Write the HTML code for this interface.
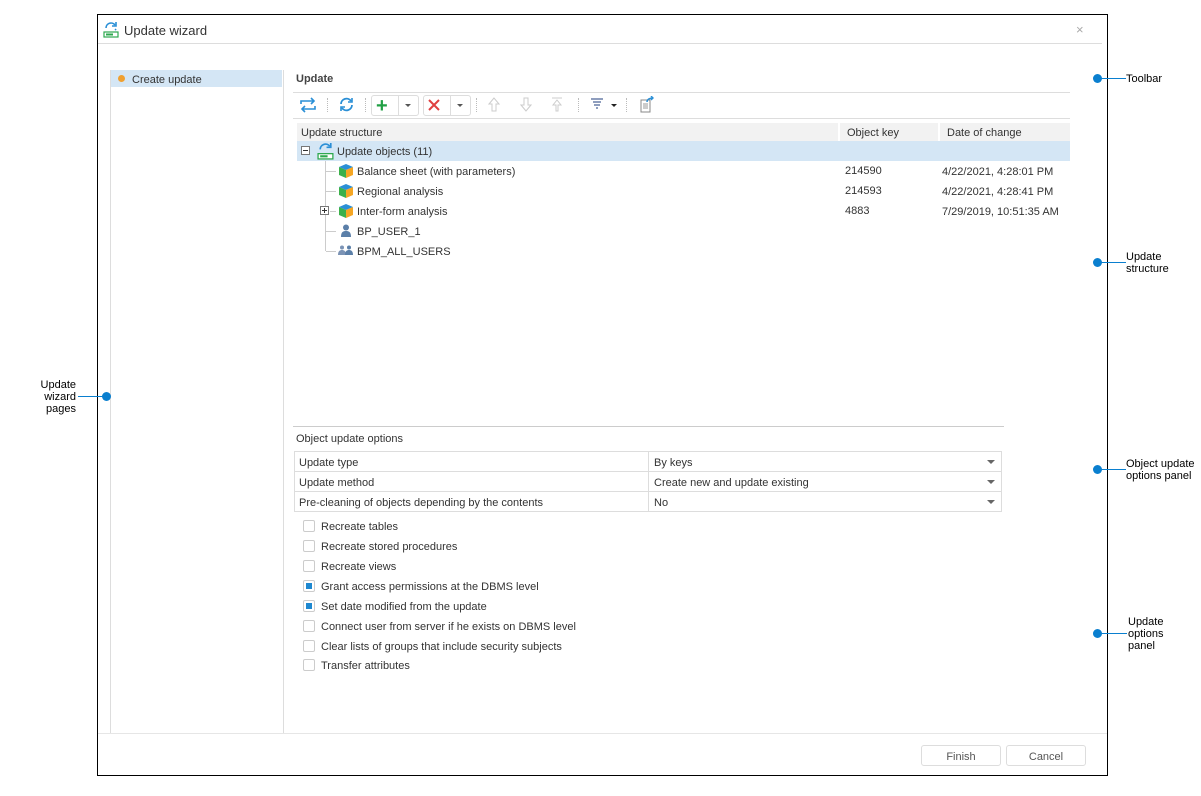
<!DOCTYPE html>
<html><head><meta charset="utf-8"><style>
*{margin:0;padding:0;box-sizing:border-box}
body{width:1201px;height:796px;background:#fff;font-family:"Liberation Sans",Arial,sans-serif;font-size:11px;color:#333;position:relative;overflow:hidden}
.a{position:absolute}
.t{white-space:nowrap;padding-top:1px}
.cb{position:absolute;left:303px;width:12px;height:12px;border:1px solid #ccc;border-radius:2px;background:#fff}
.cb.on::after{content:"";position:absolute;left:2px;top:2px;width:6px;height:6px;background:#1e88d0}
.cl{position:absolute;left:321px}
.dot{position:absolute;width:9px;height:9px;border-radius:50%;background:#0a7fcf}
.ln{position:absolute;height:1px;background:#0a7fcf}
.ann{position:absolute;font-size:11px;color:#000;line-height:12px}
.row{position:absolute;left:294px;width:708px;height:20px;border:1px solid #ddd;border-top:none}
.row span{position:absolute;top:5px}
.arr{position:absolute;right:6px;top:8px;border-left:4px solid transparent;border-right:4px solid transparent;border-top:4px solid #666}
.vsep{position:absolute;top:98px;width:1px;height:14px;border-left:1px dotted #bbb}
.cube{position:absolute;width:14px;height:14px}
</style></head><body>

<div class="a" style="left:97px;top:14px;width:1011px;height:762px;border:1px solid #000"></div>
<svg class="a" style="left:103px;top:21px" width="17" height="17" viewBox="0 0 17 17"><path d="M3 7a5 5 0 0 1 9-3" stroke="#2a8fd6" stroke-width="1.6" fill="none"/><path d="M13 1v4h-4" stroke="#2a8fd6" stroke-width="1.6" fill="none"/><path d="M13 8a5 5 0 0 1-1 1" stroke="#2a8fd6" stroke-width="1.6" fill="none"/><rect x="1" y="11" width="14" height="5" fill="#fff" stroke="#2ea84f" stroke-width="1.2"/><rect x="3" y="12.5" width="7" height="2" fill="#2ea84f"/></svg>
<div class="a t" style="left:124px;top:22px;font-size:13px;color:#333">Update wizard</div>
<div class="a" style="left:1076px;top:22px;font-size:13px;color:#aaa">×</div>
<div class="a" style="left:98px;top:43px;width:1004px;height:1px;background:#ddd"></div>

<div class="a" style="left:110px;top:70px;width:1px;height:663px;background:#ddd"></div>
<div class="a" style="left:283px;top:70px;width:1px;height:663px;background:#ddd"></div>
<div class="a" style="left:111px;top:70px;width:171px;height:17px;background:#d4e6f5"></div>
<div class="a" style="left:118px;top:75px;width:7px;height:7px;border-radius:50%;background:#f0a030"></div>
<div class="a t" style="left:132px;top:73px">Create update</div>
<div class="a" style="left:98px;top:733px;width:1009px;height:1px;background:#e6e6e6"></div>

<div class="a t" style="left:296px;top:72px;font-weight:bold;color:#444">Update</div>
<div class="a" style="left:293px;top:92px;width:777px;height:1px;background:#ddd"></div>
<div class="a" style="left:293px;top:118px;width:777px;height:1px;background:#ddd"></div>
<svg class="a" style="left:299px;top:97px" width="18" height="16" viewBox="0 0 18 16"><path d="M2 7V4h12" stroke="#2a8fd6" stroke-width="1.6" fill="none"/><path d="M12 1l3 3-3 3" stroke="#2a8fd6" stroke-width="1.6" fill="none"/><path d="M16 9v3H4" stroke="#2a8fd6" stroke-width="1.6" fill="none"/><path d="M6 9l-3 3 3 3" stroke="#2a8fd6" stroke-width="1.6" fill="none"/></svg>
<div class="vsep" style="left:327px"></div>
<svg class="a" style="left:338px;top:96px" width="17" height="17" viewBox="0 0 17 17"><path d="M3 8a5.5 5.5 0 0 1 10-3" stroke="#2a8fd6" stroke-width="1.8" fill="none"/><path d="M14 9a5.5 5.5 0 0 1-10 3" stroke="#2a8fd6" stroke-width="1.8" fill="none"/><path d="M14 2v4h-4M3 15v-4h4" stroke="#2a8fd6" stroke-width="1.6" fill="none"/></svg>
<div class="vsep" style="left:365px"></div>
<div class="a" style="left:371px;top:95px;width:48px;height:21px;border:1px solid #ddd;border-radius:3px"></div>
<div class="a" style="left:398px;top:96px;width:1px;height:19px;background:#ddd"></div>
<div class="a" style="left:376px;top:98px;font-size:20px;line-height:16px;color:#22a045;font-weight:bold">+</div>
<div class="a" style="left:405px;top:104px;border-left:3px solid transparent;border-right:3px solid transparent;border-top:3px solid #555"></div>
<div class="a" style="left:423px;top:95px;width:48px;height:21px;border:1px solid #ddd;border-radius:3px"></div>
<div class="a" style="left:450px;top:96px;width:1px;height:19px;background:#ddd"></div>
<svg class="a" style="left:428px;top:99px" width="12" height="12"><path d="M1 1l10 10M11 1L1 11" stroke="#e04040" stroke-width="2"/></svg>
<div class="a" style="left:457px;top:104px;border-left:3px solid transparent;border-right:3px solid transparent;border-top:3px solid #555"></div>
<div class="vsep" style="left:476px"></div>
<svg class="a" style="left:488px;top:97px" width="12" height="15"><path d="M6 1L1 7h3v7h4V7h3z" stroke="#ccc" fill="none"/></svg>
<svg class="a" style="left:520px;top:97px" width="12" height="15"><path d="M6 14L1 8h3V1h4v7h3z" stroke="#ccc" fill="none"/></svg>
<svg class="a" style="left:551px;top:97px" width="12" height="15"><path d="M1 1h10M6 3L2 8h3v6h2V8h3z" stroke="#ccc" fill="none"/></svg>
<div class="vsep" style="left:578px"></div>
<svg class="a" style="left:590px;top:98px" width="14" height="13"><path d="M1 1h12M3 4h8M4 7h6M6 10h2" stroke="#6a7fa8" stroke-width="1.6"/></svg>
<div class="a" style="left:611px;top:104px;border-left:3px solid transparent;border-right:3px solid transparent;border-top:3px solid #222"></div>
<div class="vsep" style="left:626px"></div>
<svg class="a" style="left:639px;top:96px" width="16" height="17"><path d="M2 4h9v12H2z" fill="#fff" stroke="#888"/><path d="M4 8h5M4 10h5M4 12h5" stroke="#999"/><path d="M8 6c0-3 3-4 6-4M12 0l2 2-2 2" stroke="#2a8fd6" stroke-width="1.4" fill="none"/></svg>

<div class="a" style="left:297px;top:123px;width:773px;height:18px;background:#f2f2f2"></div>
<div class="a" style="left:838px;top:123px;width:2px;height:18px;background:#fff"></div>
<div class="a" style="left:938px;top:123px;width:2px;height:18px;background:#fff"></div>
<div class="a t" style="left:301px;top:126px;color:#333">Update structure</div>
<div class="a t" style="left:847px;top:126px">Object key</div>
<div class="a t" style="left:947px;top:126px">Date of change</div>
<div class="a" style="left:297px;top:141px;width:773px;height:20px;background:#d4e6f5"></div>
<div class="a" style="left:301px;top:146px;width:9px;height:9px;border:1px solid #777;background:#fff"></div>
<div class="a" style="left:303px;top:150px;width:5px;height:1px;background:#333"></div>
<svg class="a" style="left:317px;top:142px" width="18" height="18" viewBox="0 0 17 17"><path d="M3 7a5 5 0 0 1 9-3" stroke="#2a8fd6" stroke-width="1.6" fill="none"/><path d="M13 1v4h-4" stroke="#2a8fd6" stroke-width="1.6" fill="none"/><rect x="1" y="11" width="14" height="5" fill="#fff" stroke="#2ea84f" stroke-width="1.2"/><rect x="3" y="12.5" width="7" height="2" fill="#2ea84f"/></svg>
<div class="a t" style="left:337px;top:145px">Update objects (11)</div>
<div class="a" style="left:325px;top:161px;width:1px;height:90px;background:#ccc"></div>
<div class="a" style="left:326px;top:171px;width:10px;height:1px;background:#ccc"></div>
<div class="a" style="left:326px;top:191px;width:10px;height:1px;background:#ccc"></div>
<div class="a" style="left:330px;top:211px;width:6px;height:1px;background:#ccc"></div>
<div class="a" style="left:326px;top:231px;width:10px;height:1px;background:#ccc"></div>
<div class="a" style="left:326px;top:251px;width:10px;height:1px;background:#ccc"></div>
<div class="a" style="left:320px;top:206px;width:9px;height:9px;border:1px solid #777;background:#fff"></div>
<div class="a" style="left:322px;top:210px;width:5px;height:1px;background:#333"></div>
<div class="a" style="left:324px;top:208px;width:1px;height:5px;background:#333"></div>
<svg class="cube" style="left:339px;top:164px" viewBox="0 0 14 14"><path d="M7 0l7 3-7 3-7-3z" fill="#2a8fd6"/><path d="M0 3l7 3v8L0 11z" fill="#3bb04a"/><path d="M14 3L7 6v8l7-3z" fill="#f5a623"/></svg>
<svg class="cube" style="left:339px;top:184px" viewBox="0 0 14 14"><path d="M7 0l7 3-7 3-7-3z" fill="#2a8fd6"/><path d="M0 3l7 3v8L0 11z" fill="#3bb04a"/><path d="M14 3L7 6v8l7-3z" fill="#f5a623"/></svg>
<svg class="cube" style="left:339px;top:204px" viewBox="0 0 14 14"><path d="M7 0l7 3-7 3-7-3z" fill="#2a8fd6"/><path d="M0 3l7 3v8L0 11z" fill="#3bb04a"/><path d="M14 3L7 6v8l7-3z" fill="#f5a623"/></svg>
<svg class="a" style="left:340px;top:224px" width="12" height="13"><circle cx="6" cy="3.5" r="3" fill="#5b7fa8"/><path d="M1 13c0-5 2-6 5-6s5 1 5 6z" fill="#5b7fa8"/></svg>
<svg class="a" style="left:338px;top:245px" width="16" height="10"><circle cx="4" cy="2.5" r="2" fill="#7b93b5"/><circle cx="11" cy="2.5" r="2" fill="#5b7fa8"/><path d="M0 10c0-4 2-5 4-5s4 1 4 5z" fill="#7b93b5"/><path d="M7 10c0-4 2-5 4-5s4 1 4 5z" fill="#5b7fa8"/></svg>
<div class="a t" style="left:357px;top:165px">Balance sheet (with parameters)</div>
<div class="a t" style="left:357px;top:185px">Regional analysis</div>
<div class="a t" style="left:357px;top:205px">Inter-form analysis</div>
<div class="a t" style="left:357px;top:225px">BP_USER_1</div>
<div class="a t" style="left:357px;top:245px">BPM_ALL_USERS</div>
<div class="a t" style="left:845px;top:164px">214590</div>
<div class="a t" style="left:845px;top:184px">214593</div>
<div class="a t" style="left:845px;top:204px">4883</div>
<div class="a t" style="left:942px;top:165px">4/22/2021, 4:28:01 PM</div>
<div class="a t" style="left:942px;top:185px">4/22/2021, 4:28:41 PM</div>
<div class="a t" style="left:942px;top:205px">7/29/2019, 10:51:35 AM</div>

<div class="a" style="left:293px;top:426px;width:711px;height:1px;background:#ccc"></div>
<div class="a t" style="left:296px;top:432px">Object update options</div>
<div class="row" style="top:451px;height:21px;border-top:1px solid #ddd"><span style="left:4px">Update type</span><span style="left:359px">By keys</span><div class="arr"></div></div>
<div class="row" style="top:472px"><span style="left:4px">Update method</span><span style="left:359px">Create new and update existing</span><div class="arr"></div></div>
<div class="row" style="top:492px"><span style="left:4px">Pre-cleaning of objects depending by the contents</span><span style="left:359px">No</span><div class="arr"></div></div>
<div class="a" style="left:648px;top:451px;width:1px;height:60px;background:#ddd"></div>

<div class="cb" style="top:520px"></div><div class="cl t" style="top:520px">Recreate tables</div>
<div class="cb" style="top:540px"></div><div class="cl t" style="top:540px">Recreate stored procedures</div>
<div class="cb" style="top:560px"></div><div class="cl t" style="top:560px">Recreate views</div>
<div class="cb on" style="top:580px"></div><div class="cl t" style="top:580px">Grant access permissions at the DBMS level</div>
<div class="cb on" style="top:600px"></div><div class="cl t" style="top:600px">Set date modified from the update</div>
<div class="cb" style="top:620px"></div><div class="cl t" style="top:620px">Connect user from server if he exists on DBMS level</div>
<div class="cb" style="top:640px"></div><div class="cl t" style="top:640px">Clear lists of groups that include security subjects</div>
<div class="cb" style="top:659px"></div><div class="cl t" style="top:659px">Transfer attributes</div>

<div class="a" style="left:921px;top:745px;width:80px;height:21px;border:1px solid #ddd;border-radius:3px;text-align:center;line-height:20px;color:#555;padding-top:1px">Finish</div>
<div class="a" style="left:1006px;top:745px;width:80px;height:21px;border:1px solid #ddd;border-radius:3px;text-align:center;line-height:20px;color:#555;padding-top:1px">Cancel</div>

<div class="dot" style="left:1093px;top:74px"></div><div class="ln" style="left:1101px;top:78px;width:25px"></div><div class="ann t" style="left:1126px;top:72px">Toolbar</div>
<div class="dot" style="left:1093px;top:258px"></div><div class="ln" style="left:1101px;top:262px;width:25px"></div><div class="ann t" style="left:1126px;top:250px">Update<br>structure</div>
<div class="dot" style="left:1093px;top:465px"></div><div class="ln" style="left:1101px;top:469px;width:25px"></div><div class="ann t" style="left:1126px;top:457px">Object update<br>options panel</div>
<div class="dot" style="left:1093px;top:629px"></div><div class="ln" style="left:1101px;top:633px;width:26px"></div><div class="ann t" style="left:1128px;top:615px">Update<br>options<br>panel</div>
<div class="dot" style="left:102px;top:392px"></div><div class="ln" style="left:78px;top:396px;width:25px"></div><div class="ann t" style="left:36px;top:378px;text-align:right;width:40px">Update<br>wizard<br>pages</div>
</body></html>
